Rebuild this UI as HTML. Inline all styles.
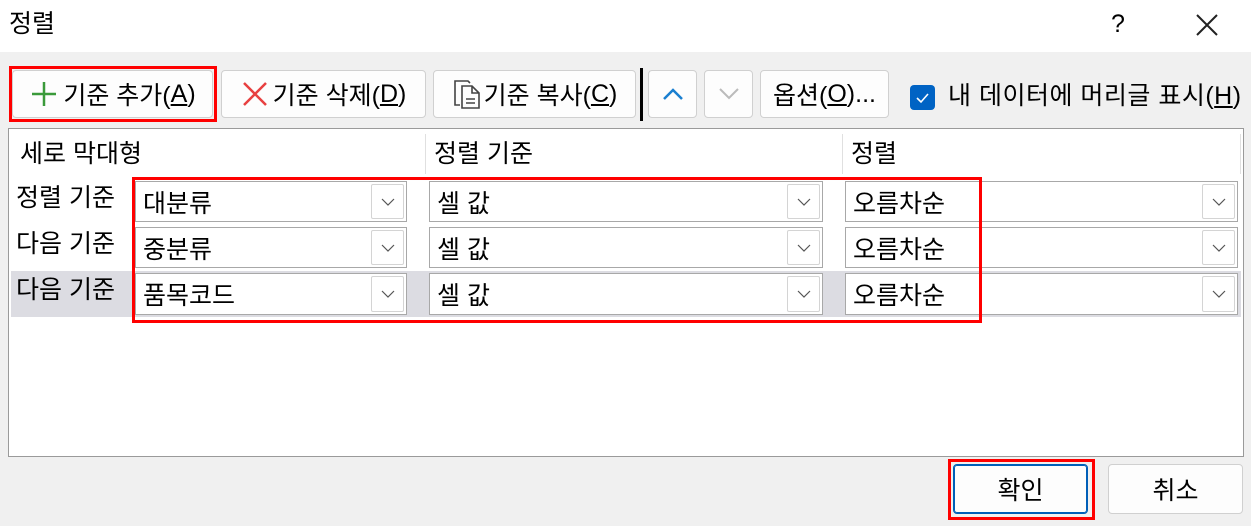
<!DOCTYPE html>
<html><head><meta charset="utf-8"><style>
*{box-sizing:border-box;margin:0;padding:0}
body{width:1251px;height:526px;background:#f0f0f0;position:relative;overflow:hidden;font-family:"Liberation Sans","Noto Sans CJK KR",sans-serif;font-size:25px;color:#000}
.a{position:absolute;line-height:1.2}
.btn{position:absolute;background:#fdfdfd;border:1px solid #d0d0d0;border-radius:4px;display:flex;align-items:center;justify-content:center;font-size:25px}
.red{position:absolute;border:3px solid #f00}
.combo{position:absolute;background:#fff;border:1px solid #a8a8a8;font-size:25px;padding-left:7px;display:flex;align-items:center}
.dd{position:absolute;right:2px;top:2px;bottom:2px;width:33px;border:1px solid #d4d4d4;border-radius:2px;background:#fff;display:flex;align-items:center;justify-content:center}
u{text-decoration:underline}
</style></head><body>
<div class="a" style="left:0;top:0;width:1251px;height:52px;background:#fff"></div>
<div class="a" style="left:9px;top:9px;font-size:25px">정렬</div>
<div class="a" style="left:1111px;top:9px;font-size:25px">?</div>
<svg class="a" style="left:1194px;top:12px" width="26" height="26"><path d="M3 3L23 23M23 3L3 23" stroke="#222" stroke-width="2"/></svg>

<div class="btn" style="left:12px;top:70px;width:201px;height:48px"><svg width="30" height="30" style="margin-right:4px"><path d="M15 3V27M3 15H27" stroke="#3a9a3a" stroke-width="2.5"/></svg>기준 추가(<u>A</u>)</div>
<div class="red" style="left:9px;top:66px;width:208px;height:56px"></div>
<div class="btn" style="left:221px;top:70px;width:205px;height:48px"><svg width="28" height="28" style="margin-right:4px"><path d="M3 3L25 25M25 3L3 25" stroke="#e84040" stroke-width="2.5"/></svg>기준 삭제(<u>D</u>)</div>
<div class="btn" style="left:433px;top:70px;width:203px;height:48px"><svg width="30" height="32" style="margin-right:2px"><path d="M8 27H3V3H16L18 5M10 8H20L27 15V30H10Z M20 8V15H27 M14 21H23M14 25H23" fill="none" stroke="#444" stroke-width="1.6"/></svg>기준 복사(<u>C</u>)</div>
<div class="a" style="left:640px;top:68px;width:3px;height:53px;background:#000"></div>
<div class="btn" style="left:648px;top:70px;width:49px;height:48px"><svg width="22" height="14"><path d="M2 12L11 3L20 12" fill="none" stroke="#1a7fd0" stroke-width="2.5"/></svg></div>
<div class="btn" style="left:704px;top:70px;width:49px;height:48px"><svg width="22" height="14"><path d="M2 2L11 11L20 2" fill="none" stroke="#bbb" stroke-width="2"/></svg></div>
<div class="btn" style="left:760px;top:70px;width:129px;height:48px">옵션(<u>O</u>)...</div>
<div class="a" style="left:910px;top:85px;width:25px;height:25px;background:#0063c4;border-radius:4px"><svg width="25" height="25"><path d="M7 13L11 17L18 9" fill="none" stroke="#fff" stroke-width="1.6"/></svg></div>
<div class="a" style="left:948px;top:81px;font-size:25px;letter-spacing:0.5px">내 데이터에 머리글 표시(<u>H</u>)</div>

<div class="a" style="left:8px;top:128px;width:1236px;height:329px;background:#fff;border:1px solid #9a9a9a"></div>
<div class="a" style="left:425px;top:134px;width:1px;height:40px;background:#e0e0e0"></div>
<div class="a" style="left:842px;top:134px;width:1px;height:40px;background:#e0e0e0"></div>
<div class="a" style="left:1240px;top:134px;width:1px;height:40px;background:#e0e0e0"></div>
<div class="a" style="left:20px;top:139px">세로 막대형</div>
<div class="a" style="left:434px;top:139px">정렬 기준</div>
<div class="a" style="left:851px;top:139px">정렬</div>
<div class="a" style="left:11px;top:271px;width:1230px;height:46px;background:#dcdce2"></div>
<div class="a" style="left:16px;top:183px">정렬 기준</div>
<div class="a" style="left:16px;top:229px">다음 기준</div>
<div class="a" style="left:16px;top:275px">다음 기준</div>

<div class="combo" style="left:135px;top:181px;width:272px;height:41px">대분류<div class="dd"><svg width="14" height="8"><path d="M1 1L7 7L13 1" fill="none" stroke="#555" stroke-width="1.2"/></svg></div></div>
<div class="combo" style="left:135px;top:227px;width:272px;height:41px">중분류<div class="dd"><svg width="14" height="8"><path d="M1 1L7 7L13 1" fill="none" stroke="#555" stroke-width="1.2"/></svg></div></div>
<div class="combo" style="left:135px;top:273px;width:272px;height:42px">품목코드<div class="dd"><svg width="14" height="8"><path d="M1 1L7 7L13 1" fill="none" stroke="#555" stroke-width="1.2"/></svg></div></div>
<div class="combo" style="left:429px;top:181px;width:394px;height:41px">셀 값<div class="dd"><svg width="14" height="8"><path d="M1 1L7 7L13 1" fill="none" stroke="#555" stroke-width="1.2"/></svg></div></div>
<div class="combo" style="left:429px;top:227px;width:394px;height:41px">셀 값<div class="dd"><svg width="14" height="8"><path d="M1 1L7 7L13 1" fill="none" stroke="#555" stroke-width="1.2"/></svg></div></div>
<div class="combo" style="left:429px;top:273px;width:394px;height:42px">셀 값<div class="dd"><svg width="14" height="8"><path d="M1 1L7 7L13 1" fill="none" stroke="#555" stroke-width="1.2"/></svg></div></div>
<div class="combo" style="left:845px;top:181px;width:393px;height:41px">오름차순<div class="dd"><svg width="14" height="8"><path d="M1 1L7 7L13 1" fill="none" stroke="#555" stroke-width="1.2"/></svg></div></div>
<div class="combo" style="left:845px;top:227px;width:393px;height:41px">오름차순<div class="dd"><svg width="14" height="8"><path d="M1 1L7 7L13 1" fill="none" stroke="#555" stroke-width="1.2"/></svg></div></div>
<div class="combo" style="left:845px;top:273px;width:393px;height:42px">오름차순<div class="dd"><svg width="14" height="8"><path d="M1 1L7 7L13 1" fill="none" stroke="#555" stroke-width="1.2"/></svg></div></div>
<div class="red" style="left:132px;top:177px;width:850px;height:146px"></div>

<div class="btn" style="left:953px;top:464px;width:135px;height:50px;border:1px solid #005fb8;box-shadow:inset 0 0 0 1px #005fb8">확인</div>
<div class="red" style="left:948px;top:459px;width:147px;height:61px"></div>
<div class="btn" style="left:1108px;top:464px;width:135px;height:50px">취소</div>
</body></html>
